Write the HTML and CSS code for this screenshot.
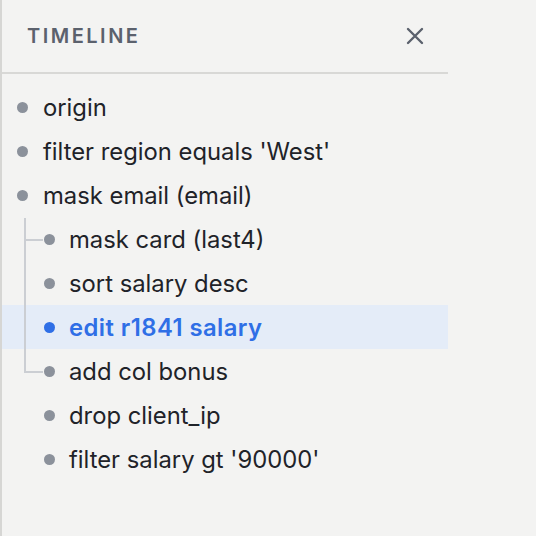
FILE: index.html
```html
<!DOCTYPE html>
<html lang="en">
<head>
<meta charset="utf-8">
<title>Timeline</title>
<link rel="stylesheet" href="styles.css">
</head>
<body>
<aside class="panel">
  <header class="panel-header">
    <h2 class="panel-title">TIMELINE</h2>
    <button class="close-btn" aria-label="Close">
      <svg width="18" height="18" viewBox="0 0 18 18"><path d="M2 2 L16 16 M16 2 L2 16" stroke="#5b616d" stroke-width="2.4" stroke-linecap="round" fill="none"/></svg>
    </button>
  </header>
  <ul class="timeline">
    <li class="item"><span class="dot"></span><span class="label">origin</span></li>
    <li class="item"><span class="dot"></span><span class="label">filter region equals 'West'</span></li>
    <li class="item"><span class="dot"></span><span class="label">mask email (email)</span></li>
    <li class="branch">
      <ul class="branch-list">
        <li class="item nested branch-start"><span class="dot"></span><span class="label">mask card (last4)</span></li>
        <li class="item nested"><span class="dot"></span><span class="label">sort salary desc</span></li>
        <li class="item nested active"><span class="dot"></span><span class="label">edit r1841 salary</span></li>
        <li class="item nested branch-end"><span class="dot"></span><span class="label">add col bonus</span></li>
      </ul>
    </li>
    <li class="item nested"><span class="dot"></span><span class="label">drop client_ip</span></li>
    <li class="item nested"><span class="dot"></span><span class="label">filter salary gt '90000'</span></li>
  </ul>
</aside>
</body>
</html>
```
FILE: styles.css
```css
* { box-sizing: border-box; }
html, body { margin: 0; padding: 0; }
body {
  background: #f3f3f2;
  font-family: Inter, "Noto Sans", sans-serif;
  color: #1f2329;
  width: 536px;
  height: 536px;
  overflow: hidden;
}
.panel {
  width: 448px;
  height: 536px;
  border-left: 2px solid #d6d6d4;
}
.panel-header {
  height: 74px;
  border-bottom: 2px solid #d8d8d6;
  display: flex;
  align-items: center;
  justify-content: space-between;
  padding: 0 24px 0 25px;
}
.panel-title {
  margin: 0;
  font-size: 20px;
  font-weight: 600;
  letter-spacing: 2.5px;
  color: #5b616d;
  line-height: 1;
}
.close-btn {
  border: 0;
  background: none;
  padding: 0;
  width: 18px;
  height: 18px;
  display: flex;
  cursor: pointer;
}
.timeline, .branch-list {
  list-style: none;
  margin: 0;
  padding: 0;
}
.timeline { padding-top: 11px; }
.item {
  height: 44px;
  display: flex;
  align-items: center;
  padding-left: 15px;
  font-size: 23.8px;
  position: relative;
}
.item.nested { padding-left: 42px; }
.dot {
  width: 11px;
  height: 11px;
  border-radius: 50%;
  background: #8b919b;
  flex: none;
  margin-right: 15px;
}
.item.nested .dot { margin-right: 14px; }
.item.active { background: #e4ecf8; color: #2f6fe6; font-weight: 600; letter-spacing: 0.45px; }
.item.active .dot { background: #2f6fe6; }
.branch { position: relative; }
.branch::before {
  content: "";
  position: absolute;
  left: 22px;
  top: 1px;
  bottom: 21px;
  width: 2px;
  background: #cbced3;
  z-index: 1;
}
.branch-start::before, .branch-end::before {
  content: "";
  position: absolute;
  left: 22px;
  width: 19px;
  top: 22px;
  height: 2px;
  background: #cbced3;
}
```
